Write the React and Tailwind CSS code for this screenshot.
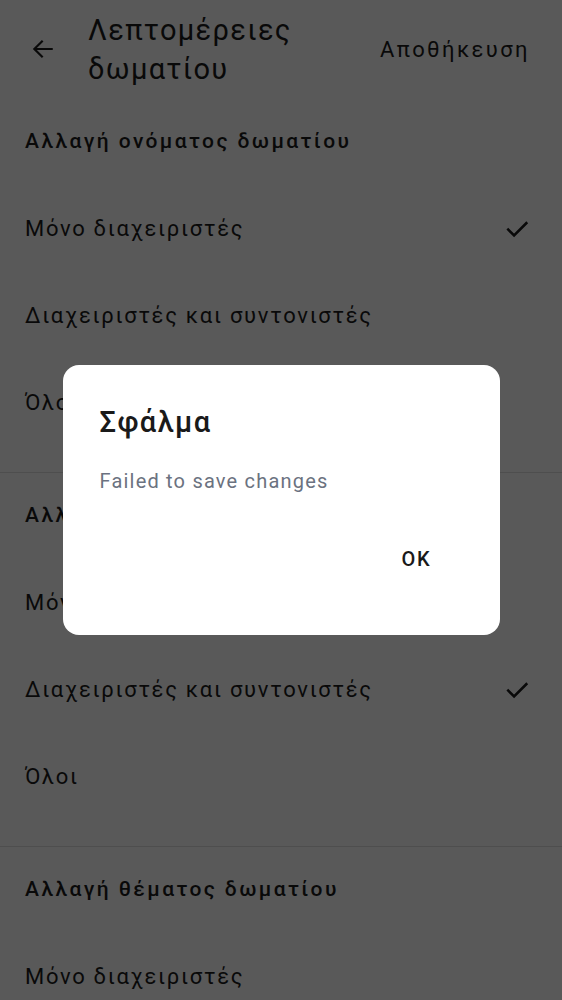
import React from "react";

function Check() {
  return (
    <svg width="28" height="28" viewBox="0 0 24 24" fill="none" stroke="#1a1a1a" strokeWidth="2.2" strokeLinecap="square">
      <path d="M4.5 12.5l5 5L20 7" />
    </svg>
  );
}

function Item({ label, checked }) {
  return (
    <div className="h-[87px] flex items-center justify-between pl-[25px] pr-[31px]">
      <span className="text-[22px] text-[#1c1c1c] tracking-[1.7px]">{label}</span>
      {checked && <Check />}
    </div>
  );
}

function Section({ title, items, checkedIdx, divider }) {
  return (
    <div className={divider ? "pb-[26px] border-b border-[#e0e0e0]" : ""}>
      <div className="h-[86px] flex items-center pl-[25px]">
        <span className="text-[21px] font-medium text-[#1c1c1c] tracking-[2.4px]">{title}</span>
      </div>
      {items.map((it, i) => (
        <Item key={i} label={it} checked={i === checkedIdx} />
      ))}
    </div>
  );
}

export default function App() {
  const items = ["Μόνο διαχειριστές", "Διαχειριστές και συντονιστές", "Όλοι"];
  return (
    <div className="relative w-[562px] h-[1000px] overflow-hidden bg-white" style={{ fontFamily: "Roboto, 'Noto Sans', sans-serif" }}>
      <div className="flex items-start h-[99px]">
        <div className="w-[88px] h-[99px] flex items-center pl-[30px] pb-[1px]">
          <svg width="26" height="26" viewBox="0 0 24 24" fill="none" stroke="#1a1a1a" strokeWidth="2" strokeLinecap="square">
            <path d="M20 12H5M11 5l-7 7 7 7" />
          </svg>
        </div>
        <div className="flex-1 pt-[11px] text-[29px] leading-[39px] text-[#1c1c1c] tracking-[1.3px]">
          Λεπτομέρειες<br />δωματίου
        </div>
        <div className="h-[99px] flex items-center pr-[32px] pb-[1px] text-[22px] text-[#1c1c1c] tracking-[2.4px]">
          Αποθήκευση
        </div>
      </div>
      <Section title="Αλλαγή ονόματος δωματίου" items={items} checkedIdx={0} divider />
      <Section title="Αλλαγή εικόνας δωματίου" items={items} checkedIdx={1} divider />
      <Section title="Αλλαγή θέματος δωματίου" items={items} checkedIdx={-1} />

      <div className="absolute inset-0 bg-black/65 flex items-start justify-center">
        <div className="mt-[365px] w-[437px] h-[270px] bg-white rounded-[16px] flex flex-col">
          <div className="pl-[37px] pt-[38px] text-[29px] leading-[38px] font-medium text-[#1a1a1a] tracking-[1.4px]">Σφάλμα</div>
          <div className="pl-[37px] pt-[26px] text-[20px] leading-[28px] text-[#6b7280] tracking-[1.2px]">Failed to save changes</div>
          <div className="flex justify-end pr-[68px] pt-[49px]">
            <span className="text-[20px] font-medium text-[#1a1a1a] tracking-[1.8px]">OK</span>
          </div>
        </div>
      </div>
    </div>
  );
}
